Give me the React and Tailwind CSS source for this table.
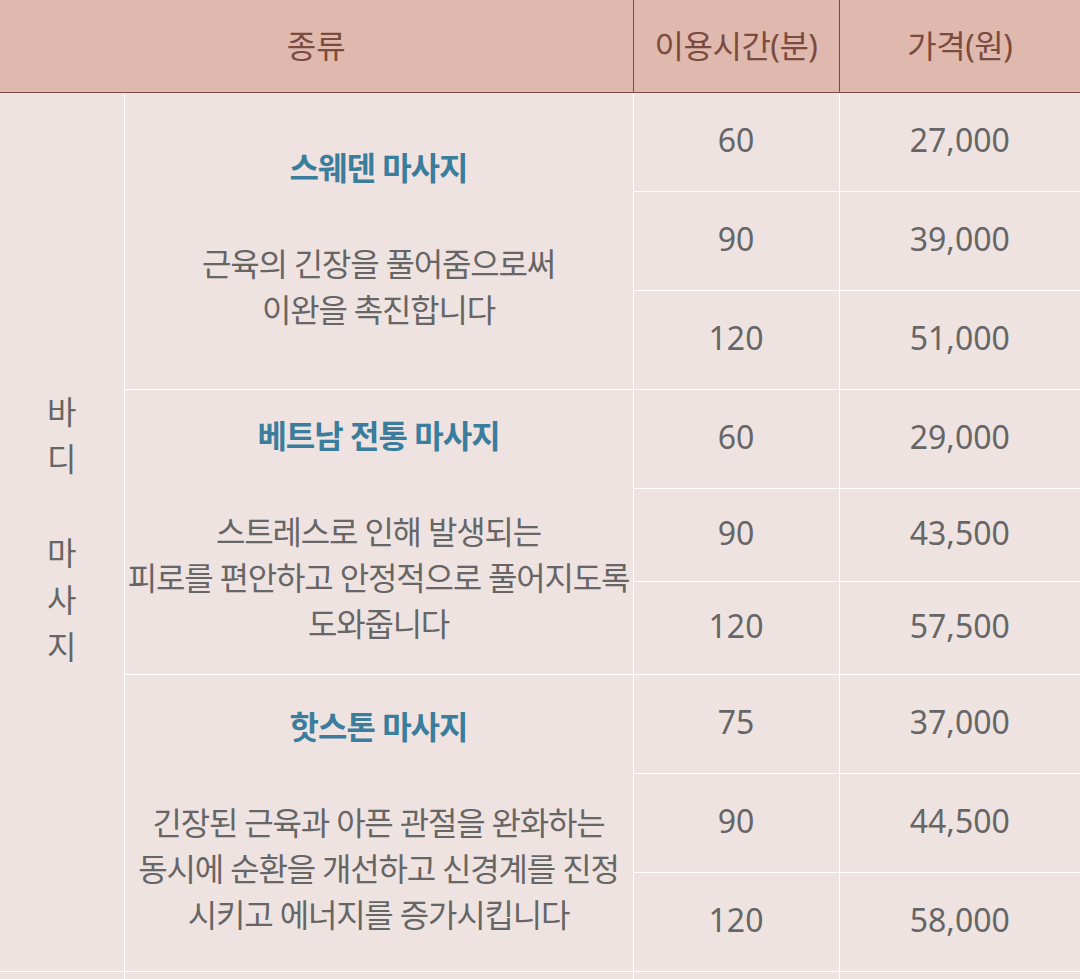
import React from "react";

const groups = [
  {
    title: "스웨덴 마사지",
    desc: ["근육의 긴장을 풀어줌으로써", "이완을 촉진합니다"],
    rows: [
      ["60", "27,000", "h-[99px]"],
      ["90", "39,000", "h-[99px]"],
      ["120", "51,000", "h-[99px]"],
    ],
  },
  {
    title: "베트남 전통 마사지",
    desc: ["스트레스로 인해 발생되는", "피로를 편안하고 안정적으로 풀어지도록", "도와줍니다"],
    rows: [
      ["60", "29,000", "h-[99px]"],
      ["90", "43,500", "h-[93px]"],
      ["120", "57,500", "h-[93px]"],
    ],
  },
  {
    title: "핫스톤 마사지",
    desc: ["긴장된 근육과 아픈 관절을 완화하는", "동시에 순환을 개선하고 신경계를 진정", "시키고 에너지를 증가시킵니다"],
    rows: [
      ["75", "37,000", "h-[99px]"],
      ["90", "44,500", "h-[99px]"],
      ["120", "58,000", "h-[99px]"],
    ],
  },
];

const App = () => {
  return (
    <div className="w-[1080px] bg-[#efe3e1] font-['Noto_Sans','Noto_Sans_CJK_KR',sans-serif] text-[32px] text-[#666]">
      <table className="w-[1080px] table-fixed border-collapse">
        <colgroup>
          <col className="w-[124px]" />
          <col className="w-[509px]" />
          <col className="w-[206px]" />
          <col className="w-[241px]" />
        </colgroup>
        <thead>
          <tr className="h-[92px] bg-[#e0b9ae] text-[#7b4b3f]">
            <th colSpan={2} className="font-normal border-b border-[#7b4b3f]">
              종류
            </th>
            <th className="font-normal border-b border-l border-[#7b4b3f] tracking-[-0.5px]">
              이용시간(분)
            </th>
            <th className="font-normal border-b border-l border-[#7b4b3f] tracking-[-0.5px]">
              가격(원)
            </th>
          </tr>
        </thead>
        <tbody>
          {groups.map((g, gi) =>
            g.rows.map((r, ri) => (
              <tr key={`${gi}-${ri}`} className={r[2]}>
                {gi === 0 && ri === 0 && (
                  <td rowSpan={9} className="border-b border-r border-white text-center align-middle leading-[47px] pb-[6px]">
                    바<br />디<br /><br />마<br />사<br />지
                  </td>
                )}
                {ri === 0 && (
                  <td rowSpan={3} className="border border-white text-center align-middle">
                    <div className="flex flex-col items-center leading-[46px] whitespace-nowrap tracking-[-1px]">
                      <p className="font-bold text-[#3a7d9c] -mt-[4px]">{g.title}</p>
                      <div className="mt-[50px] tracking-[-1.2px]">
                        {g.desc.map((d) => (
                          <p key={d}>{d}</p>
                        ))}
                      </div>
                    </div>
                  </td>
                )}
                <td className="border border-white text-center align-middle pb-[4px]">{r[0]}</td>
                <td className="border-y border-l border-white text-center align-middle pb-[4px]">{r[1]}</td>
              </tr>
            ))
          )}
          <tr className="h-[99px]">
            <td className="border-t border-r border-white"></td>
            <td className="border-t border-r border-white"></td>
            <td className="border-t border-r border-white"></td>
            <td className="border-t border-white"></td>
          </tr>
        </tbody>
      </table>
    </div>
  );
};

export default App;
